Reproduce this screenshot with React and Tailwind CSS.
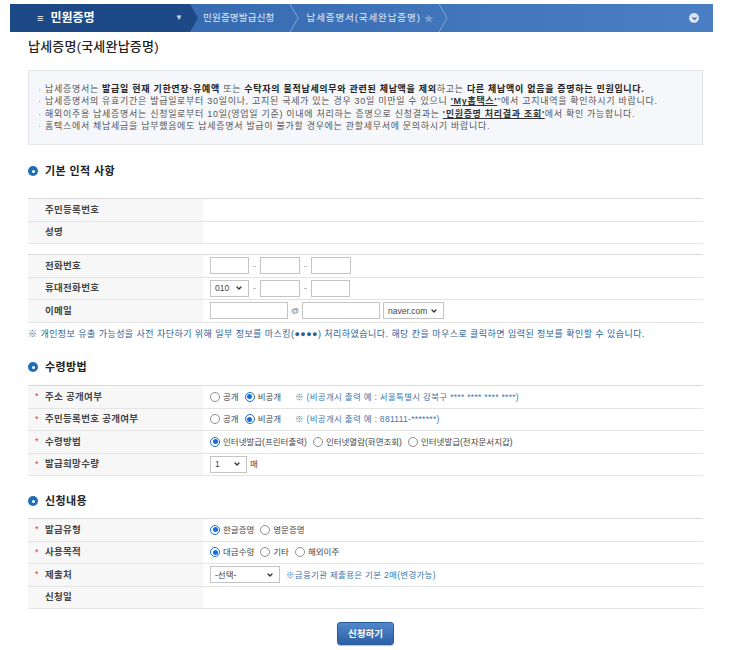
import { ChevronDown } from 'lucide-react'

// 납세증명 신청 화면 — 작은 폰트/행 높이는 스크린샷 기준 그대로

function Radio({ checked }) {
  if (checked) {
    return (
      <span className="inline-flex items-center justify-center w-[10px] h-[10px] rounded-full border-[1.5px] border-[#1a6ed8] bg-white shrink-0">
        <span className="w-[5px] h-[5px] rounded-full bg-[#1a6ed8]" />
      </span>
    )
  }
  return <span className="inline-block w-[10px] h-[10px] rounded-full border border-[#8f8f8f] bg-white shrink-0" />
}

function Opt({ checked, children }) {
  return (
    <span className="flex items-center gap-[3px] mr-[6px]">
      <Radio checked={checked} />
      <span>{children}</span>
    </span>
  )
}

function Box({ w }) {
  return <span className={`h-[17px] border border-[#c4c4c4] bg-white ${w}`} />
}

function Select({ w, children }) {
  return (
    <span className={`flex items-center justify-between h-[17px] border border-[#c4c4c4] bg-white pl-[4px] pr-[5px] ${w}`}>
      <span>{children}</span>
      <ChevronDown size={8} strokeWidth={4} className="text-[#333]" />
    </span>
  )
}

function Dash() {
  return <span className="w-[11px] text-center text-[#888]">-</span>
}

function Row({ label, req, children }) {
  return (
    <div className="flex h-[22.5px] border-b border-[#e4e4e4]">
      <div className="flex items-center w-[175px] bg-[#f7f7f7] pl-[7px]">
        <span className="w-[10px] text-[#d23a3a] text-[9px] leading-none">{req ? '*' : ''}</span>
        <span className="font-bold text-[9.5px] text-[#444] tracking-[0.3px]">{label}</span>
      </div>
      <div className="flex-1 flex items-center pl-[7px] text-[8.5px] text-[#444]">{children}</div>
    </div>
  )
}

function Section({ title, className }) {
  return (
    <div className={`flex items-center h-[16px] ${className}`}>
      <span className="flex items-center justify-center w-[10px] h-[10px] rounded-full bg-[#1f6db5]">
        <span className="w-[3px] h-[3px] rounded-full bg-white" />
      </span>
      <span className="ml-[7px] font-bold text-[11px] text-[#222] tracking-[0.4px]">{title}</span>
    </div>
  )
}

function Crumb() {
  return (
    <svg width="14" height="28" className="shrink-0">
      <polyline points="3,0 11,14 3,28" fill="none" stroke="#7fa3d4" strokeWidth="1" />
    </svg>
  )
}

export default function App() {
  return (
    <div className="min-h-[650px] bg-white font-['Liberation_Sans','Noto_Sans_CJK_KR',sans-serif] text-[#333]">
      {/* 상단 경로 바 */}
      <div className="pt-[4px] pl-[10px]">
        <div className="flex items-center h-[28px] w-[703px] bg-gradient-to-r from-[#3365aa] via-[#3d72b8] to-[#4a7fc3]">
          <div className="flex items-center h-full w-[180px] bg-[#1d4a87] pl-[27px] text-white">
            <span className="text-[11px] leading-none">≡</span>
            <span className="ml-[7px] font-bold text-[12px]">민원증명</span>
            <span className="ml-auto mr-[7px] text-[8px] text-[#cdd9ea]">▼</span>
          </div>
          <svg width="8" height="28" className="shrink-0">
            <polygon points="0,0 8,14 0,28" fill="#1d4a87" />
          </svg>
          <span className="ml-[5px] text-[9.5px] tracking-[0.2px] text-[#e3ebf6]">민원증명발급신청</span>
          <span className="ml-[12px]"><Crumb /></span>
          <span className="ml-[6px] text-[9.5px] tracking-[0.9px] text-[#e3ebf6]">납세증명서(국세완납증명)</span>
          <span className="ml-[3px] text-[10px] text-[#7f9fcd]">★</span>
          <span className="ml-[2px]"><Crumb /></span>
          <span className="ml-auto mr-[14px] flex items-center justify-center w-[10px] h-[10px] rounded-full bg-[#dbe4f1]">
            <ChevronDown size={7} strokeWidth={4} className="text-[#2b5a9c]" />
          </span>
        </div>
      </div>

      <div className="pl-[28px] w-[703px]">
        <h1 className="mt-[7px] h-[16px] leading-[16px] text-[13px] font-medium text-[#222] tracking-[0.2px]">납세증명(국세완납증명)</h1>

        {/* 안내 박스 */}
        <div className="mt-[15px] border border-[#e3e6eb] bg-[#f5f7fa] pl-[9px] py-[12px] text-[9px] leading-[12.3px] tracking-[0.7px] text-[#555]">
          <p className="flex">
            <span className="w-[7px] text-[#999]">·</span>
            <span>
              납세증명서는 <b className="text-[#222]">발급일 현재 기한연장·유예액</b> 또는 <b className="text-[#222]">수탁자의 물적납세의무와 관련된 체납액을 제외</b>하고는 <b className="text-[#222]">다른 체납액이 없음을 증명하는 민원입니다.</b>
            </span>
          </p>
          <p className="flex">
            <span className="w-[7px] text-[#999]">·</span>
            <span>
              납세증명서의 유효기간은 발급일로부터 30일이나, 고지된 국세가 있는 경우 30일 미만일 수 있으니 <b className="underline text-[#333]">'My홈택스'</b>"에서 고지내역을 확인하시기 바랍니다.
            </span>
          </p>
          <p className="flex">
            <span className="w-[7px] text-[#999]">·</span>
            <span>
              해외이주용 납세증명서는 신청일로부터 10일(영업일 기준) 이내에 처리하는 증명으로 신청결과는 <b className="underline text-[#333]">'민원증명 처리결과 조회'</b>에서 확인 가능합니다.
            </span>
          </p>
          <p className="flex">
            <span className="w-[7px] text-[#999]">·</span>
            <span>홈택스에서 체납세금을 납부했음에도 납세증명서 발급이 불가할 경우에는 관할세무서에 문의하시기 바랍니다.</span>
          </p>
        </div>

        {/* 기본 인적 사항 */}
        <Section title="기본 인적 사항" className="mt-[18px]" />
        <div className="mt-[19px] border-t border-[#d9d9d9]">
          <Row label="주민등록번호" />
          <Row label="성명" />
        </div>
        <div className="mt-[10px] border-t border-[#d9d9d9]">
          <Row label="전화번호">
            <Box w="w-[39px]" /><Dash /><Box w="w-[40px]" /><Dash /><Box w="w-[40px]" />
          </Row>
          <Row label="휴대전화번호">
            <Select w="w-[39px]">010</Select><Dash /><Box w="w-[40px]" /><Dash /><Box w="w-[39px]" />
          </Row>
          <Row label="이메일">
            <Box w="w-[78px]" />
            <span className="w-[14px] text-center text-[8px] text-[#777]">@</span>
            <Box w="w-[78px]" />
            <span className="ml-[3px]"><Select w="w-[61px]">naver.com</Select></span>
          </Row>
        </div>
        <p className="mt-[5.5px] leading-[12px] text-[9px] tracking-[0.45px] text-[#2a6497]">
          ※ 개인정보 유출 가능성을 사전 차단하기 위해 일부 정보를 마스킹(●●●●) 처리하였습니다. 해당 칸을 마우스로 클릭하면 입력된 정보를 확인할 수 있습니다.
        </p>

        {/* 수령방법 */}
        <Section title="수령방법" className="mt-[19px]" />
        <div className="mt-[10px] border-t border-[#d9d9d9]">
          <Row label="주소 공개여부" req>
            <Opt>공개</Opt>
            <Opt checked>비공개</Opt>
            <span className="ml-[8px] tracking-[0.3px] text-[#3a78ad]">※ (비공개시 출력 예 : 서울특별시 강북구 **** **** **** ****)</span>
          </Row>
          <Row label="주민등록번호 공개여부" req>
            <Opt>공개</Opt>
            <Opt checked>비공개</Opt>
            <span className="ml-[8px] tracking-[0.3px] text-[#3a78ad]">※ (비공개시 출력 예 : 881111-*******)</span>
          </Row>
          <Row label="수령방법" req>
            <Opt checked>인터넷발급(프린터출력)</Opt>
            <Opt>인터넷열람(화면조회)</Opt>
            <Opt>인터넷발급(전자문서지갑)</Opt>
          </Row>
          <Row label="발급희망수량" req>
            <Select w="w-[37px]">1</Select>
            <span className="ml-[3px]">매</span>
          </Row>
        </div>

        {/* 신청내용 */}
        <Section title="신청내용" className="mt-[17px]" />
        <div className="mt-[9px] border-t border-[#d9d9d9]">
          <Row label="발급유형" req>
            <Opt checked>한글증명</Opt>
            <Opt>영문증명</Opt>
          </Row>
          <Row label="사용목적" req>
            <Opt checked>대금수령</Opt>
            <Opt>기타</Opt>
            <Opt>해외이주</Opt>
          </Row>
          <Row label="제출처" req>
            <Select w="w-[70px]">-선택-</Select>
            <span className="ml-[6px] tracking-[0.3px] text-[#3a78ad]">※금융기관 제출용은 기본 2매(변경가능)</span>
          </Row>
          <Row label="신청일" />
        </div>

        <div className="flex justify-center mt-[13px]">
          <button className="h-[23px] w-[57px] rounded-[3px] border border-[#2a5b9d] bg-gradient-to-b from-[#5088ca] to-[#2d60a6] text-white font-bold text-[9.5px] shadow-[0_1px_1px_rgba(0,0,0,0.25)]">
            신청하기
          </button>
        </div>
      </div>
    </div>
  )
}
